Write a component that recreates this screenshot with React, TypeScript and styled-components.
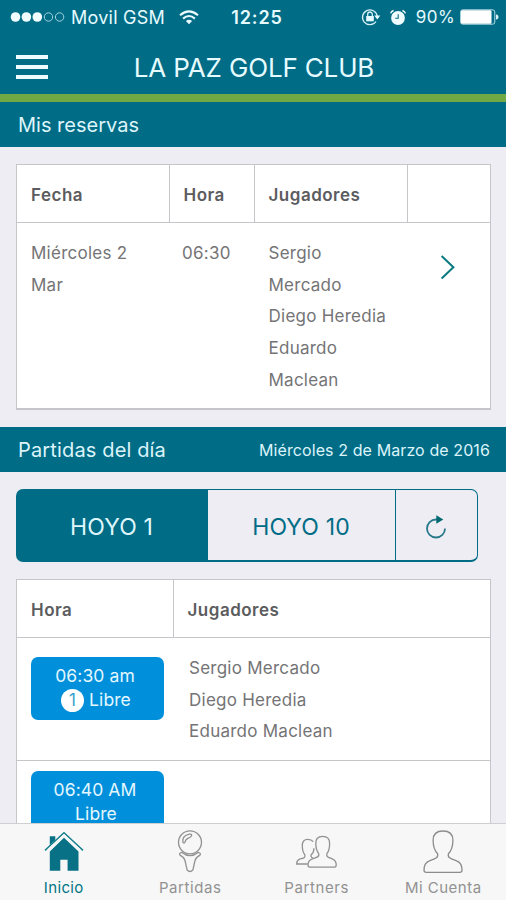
import React from "react";
import styled, { createGlobalStyle, css } from "styled-components";

const teal = "#006c86";
const line = "#c6c5ca";

const GlobalStyle = createGlobalStyle`
  *, *::before, *::after { box-sizing: border-box; }
  body { margin: 0; background: #eeedf3; }
  #root { height: 900px; }
`;

const Screen = styled.div`
  display: flex;
  flex-direction: column;
  width: 506px;
  height: 900px;
  overflow: hidden;
  background: #eeedf3;
  color: #747476;
  font-family: Inter, "Liberation Sans", sans-serif;
`;

const TopBar = styled.header`
  flex: none;
  height: 102px;
  background: ${teal};
  border-bottom: 8px solid #70a843;
  color: #e6fbff;
`;

const StatusBar = styled.div`
  display: grid;
  grid-template-columns: 1fr auto 1fr;
  align-items: center;
  height: 34px;
  padding: 0 7px 0 10px;
`;

const StatusGroup = styled.div<{ $end?: boolean }>`
  display: flex;
  align-items: center;
  justify-content: ${(p) => (p.$end ? "flex-end" : "flex-start")};
  white-space: nowrap;
`;

const Carrier = styled.span`
  margin: 0 14px 0 6px;
  font-size: 18px;
  letter-spacing: 0.25px;
`;

const Clock = styled.span`
  padding-left: 5px;
  font-size: 18px;
  font-weight: 600;
  letter-spacing: 0.9px;
`;

const Percent = styled.span`
  margin: 0 5px 0 9px;
  font-size: 17px;
  letter-spacing: 0.4px;
`;

const NavBar = styled.div`
  display: grid;
  grid-template-columns: 32px 1fr 32px;
  align-items: center;
  height: 60px;
  padding: 6px 15px 0 16px;
`;

const MenuButton = styled.button`
  display: flex;
  flex-direction: column;
  gap: 6px;
  padding: 0;
  border: 0;
  background: none;
`;

const MenuLine = styled.span`
  width: 32px;
  height: 4px;
  background: #effcff;
`;

const Title = styled.h1`
  margin: 0;
  padding: 1px 0 0 1px;
  font-size: 26px;
  font-weight: 400;
  line-height: 32px;
  letter-spacing: -0.16px;
  text-align: center;
  white-space: nowrap;
`;

const SectionBar = styled.div`
  display: flex;
  flex: none;
  align-items: center;
  justify-content: space-between;
  height: 45px;
  padding: 0 16px 0 18px;
  background: ${teal};
  color: #dcf4fa;
  white-space: nowrap;
`;

const SectionTitle = styled.h2<{ $tracking: number }>`
  margin: 0;
  font-size: 20px;
  font-weight: 400;
  letter-spacing: ${(p) => p.$tracking}px;
`;

const SectionDate = styled.span`
  font-size: 16px;
  letter-spacing: 0.1px;
`;

const Table = styled.div<{ $columns: string; $open?: boolean }>`
  --columns: ${(p) => p.$columns};
  flex: none;
  margin: 17px 15px ${(p) => (p.$open ? 0 : 17)}px 16px;
  border: 1.5px solid ${line};
  border-bottom-width: ${(p) => (p.$open ? 0 : 2)}px;
  background: #fff;
`;

const HeadRow = styled.div`
  display: grid;
  grid-template-columns: var(--columns);
  height: 58px;
  border-bottom: 1px solid ${line};
`;

const HeadCell = styled.div`
  display: flex;
  align-items: center;
  padding: 2px 0 0 14px;
  color: #5c5c5e;
  font-size: 17px;
  font-weight: 560;
  letter-spacing: 0.5px;

  & + & { padding-left: 13.5px; border-left: 1px solid ${line}; }
`;

const BodyRow = styled.div<{ $height: number }>`
  display: grid;
  grid-template-columns: var(--columns);
  height: ${(p) => p.$height}px;
  border-bottom: 1px solid ${line};

  &:last-child { border-bottom: 0; }
`;

const BodyCell = styled.div<{ $left?: number; $top?: number }>`
  padding: ${(p) => p.$top ?? 15}px 0 0 ${(p) => p.$left ?? 14}px;
  font-size: 17px;
  line-height: 31.7px;
  letter-spacing: 0.25px;
  white-space: nowrap;
`;

const Line = styled.div``;

const ArrowCell = styled.div`
  padding: 31px 0 0 33px;
`;

const Segments = styled.div`
  display: grid;
  flex: none;
  grid-template-columns: 190px 188px 1fr;
  height: 73px;
  margin: 17px 28px 0 16px;
  border: 1.5px solid ${teal};
  border-bottom-width: 2px;
  border-radius: 7px;
  background: linear-gradient(90deg, ${teal} 190px, transparent 190px);
  overflow: hidden;
`;

const Segment = styled.button<{ $active?: boolean }>`
  display: flex;
  align-items: center;
  justify-content: center;
  padding: 3px 1px 0 0;
  border: 0;
  background: none;
  color: ${teal};
  font: 400 23px Inter, "Liberation Sans", sans-serif;
  letter-spacing: 0.15px;

  & + & { border-left: 1.5px solid ${teal}; }
  ${(p) =>
    p.$active &&
    css`
      color: #dff6fb;
    `}
`;

const Slot = styled.button`
  display: block;
  width: 133px;
  height: 63px;
  padding: 0 4px 0 0;
  border: 0;
  border-radius: 7px;
  background: #0090db;
  color: #e4f7ff;
  font: 400 17.5px/24px Inter, "Liberation Sans", sans-serif;
  letter-spacing: 0.1px;
`;

const SlotStatus = styled.div`
  display: flex;
  align-items: center;
  justify-content: center;
  gap: 5px;
  height: 24px;
  padding-left: 2px;
`;

const Badge = styled.span`
  width: 23px;
  height: 23px;
  border-radius: 50%;
  background: #fff;
  color: #3a9fd0;
  font-size: 17px;
  line-height: 23px;
`;

const Scroller = styled.main`
  flex: 1;
  min-height: 0;
  overflow: hidden;
`;

const TabBar = styled.nav`
  display: grid;
  flex: none;
  grid-template-columns: repeat(4, 1fr);
  height: 77px;
  border-top: 1.5px solid #cfcfd1;
  background: #f7f7f7;
`;

const Tab = styled.a<{ $active?: boolean; $tracking: number }>`
  display: flex;
  flex-direction: column;
  align-items: center;
  padding-left: 1px;
  color: ${(p) => (p.$active ? "#007584" : "#929292")};
  font-size: 15px;
  line-height: 20px;
  letter-spacing: ${(p) => p.$tracking}px;
  white-space: nowrap;
`;

const TabIcon = styled.span`
  display: flex;
  justify-content: center;
  height: 54px;
  padding-top: 6px;
`;

const StatusIcons = styled.span`
  display: flex;
  align-items: center;
  gap: 8px;
`;

const Signal = () => (
  <svg width="55" height="12" viewBox="0 0 55 12" fill="#f2fdff">
    <circle cx="5.5" cy="6" r="4.8" />
    <circle cx="16.4" cy="6" r="4.8" />
    <circle cx="27.3" cy="6" r="4.8" />
    <g fill="none" stroke="#a5d3df" strokeWidth="1">
      <circle cx="38.5" cy="6" r="4.2" />
      <circle cx="49.6" cy="6" r="4.2" />
    </g>
  </svg>
);

const Wifi = () => (
  <svg width="20" height="15" viewBox="0 0 20 15" fill="none" stroke="#eafbff" strokeWidth="2.1">
    <path d="M1 5.3Q10-2.5 19 5.3M4.1 8.6Q10 3.4 15.9 8.6" />
    <path d="M6.9 11.1Q10 8.5 13.1 11.1L10 14.2Z" fill="#eafbff" stroke="none" />
  </svg>
);

const RotationLock = () => (
  <svg width="20" height="18" viewBox="0 0 20 18" fill="none" stroke="#d5f0f6" strokeWidth="1.3">
    <path d="M15 13.5A7.4 7.4 0 1 1 16.2 8" />
    <path d="M13.3 7.6h6l-3 4z" fill="#e6fbff" stroke="none" />
    <rect x="5.2" y="8" width="7.6" height="5.3" fill="#e6fbff" stroke="none" />
    <path d="M6.7 8V6.3a2.3 2.3 0 0 1 4.6 0V8" />
  </svg>
);

const Alarm = () => (
  <svg width="18" height="17" viewBox="0 0 18 17">
    <circle cx="9" cy="9" r="6.9" fill="#f0fdff" />
    <path d="M1.6 4.4Q2.2 2.2 4.6 1.5M16.4 4.4Q15.8 2.2 13.4 1.5" fill="none" stroke="#f0fdff" strokeWidth="1.4" />
    <path d="M9.2 5.2v4H6.2" fill="none" stroke={teal} strokeWidth="1.1" />
  </svg>
);

const Battery = () => (
  <svg width="39" height="16" viewBox="0 0 39 16">
    <rect x=".6" y=".8" width="34.2" height="14.4" rx="2.2" fill="none" stroke="#b6dbe5" strokeWidth="1" />
    <rect x="1" y="1.2" width="30.5" height="13.6" rx="1.3" fill="#fff" />
    <path d="M36 5.2q2.6.7 2.6 2.8T36 10.8z" fill="#d9f0f6" />
  </svg>
);

const Chevron = () => (
  <svg width="16" height="26" viewBox="0 0 16 26" fill="none" stroke="#087a80" strokeWidth="2">
    <path d="M1.6 2L13.4 13.2L1.6 24.5" />
  </svg>
);

const Refresh = () => (
  <svg width="22" height="24" viewBox="0 0 22 24" fill="none" stroke="#27798a" strokeWidth="1.8">
    <path d="M12 4.5H11A9 9 0 1 0 20 13.5" />
    <path d="M11.3.3L18.3 4.6L11.3 8.8Z" fill="#006a72" stroke="none" />
  </svg>
);

const HomeIcon = () => (
  <svg width="40" height="42" viewBox="0 0 40 42">
    <path d="M5.8 6.2h5.5v4L5.8 15zM20 7.7L34.5 21.4V40.8H23.6V29.7H16.3V40.8H5.8V21.4Z" fill="#087186" />
    <path d="M1 20.4L20 2.8L39 20.4" fill="none" stroke="#15808b" strokeWidth="1.5" />
    <path d="M4 19.8L20 5.3L36 19.8" fill="none" stroke="#f7f7f7" strokeWidth="1.8" />
  </svg>
);

const TeeIcon = () => (
  <svg width="28" height="43" viewBox="0 0 28 43" fill="none" stroke="#929292" strokeWidth="1.3">
    <circle cx="14" cy="12.3" r="11.5" />
    <path d="M6.8 12.2Q6 5.8 13.3 4.2Q16 3.8 15.6 5.8Q14.8 7.3 12.4 8.1Q9.5 9.2 9.1 12Q8 14 6.8 12.2Z" />
    <path d="M6 22.4Q2.6 22.9 4 25.1Q8.1 27.2 9 30.5L11.1 40Q14 43 16.9 40L19 30.5Q20 27.2 24 25.1Q25.4 22.9 22 22.4Q14 29 6 22.4Z" />
  </svg>
);

const PersonIcon = () => (
  <svg width="40" height="44" viewBox="0 0 40 44" fill="none" stroke="#8d8d8d" strokeWidth="1.3">
    <path d="M20 1C13.1 1 10.1 4.6 10.1 10.2C10.1 17.6 12 21 14.6 23.8C15.7 27.8 11.8 29 6.5 30.8C1.5 32.4 1 36.2 1 40.3Q1 42.3 3.2 42.3H36.8Q39 42.3 39 40.3C39 36.2 38.5 32.4 33.5 30.8C28.2 29 24.3 27.8 25.4 23.8C28 21 29.9 17.6 29.9 10.2C29.9 4.6 26.9 1 20 1Z" />
  </svg>
);

const PartnersIcon = () => (
  <svg width="41" height="42" viewBox="0 0 41 42" fill="none" stroke="#929292" strokeWidth="1.3">
    <path d="M17.2 11.7C15.8 9.8 13.7 9.4 11.8 9.4C8 9.4 6.3 11.5 6.3 15.6C6.3 20.5 7.3 23 8.8 24.7C9.8 28.1 6.8 28 3.5 29.2Q.7 30.5.7 34H11.7" />
    <path d="M26.7 6.4C21.5 6.4 19.8 9.1 19.8 13.3C19.8 18.8 21 21.5 22.7 23.6C23.7 26.8 20.6 27.4 16.5 28.8Q12 30.2 12 34.8Q12 37.2 13.7 37.2H38.7Q40.2 37.2 40.2 34.8Q40.2 30.2 36.2 28.8C32.1 27.4 30 26.8 30.9 23.6C32.9 21.5 33.6 18.8 33.6 13.3C33.6 9.1 31.9 6.4 26.7 6.4Z" />
    <path d="M18 18.2Q18 22.5 15 25Q14.5 27 17 28.3" />
  </svg>
);

export default function App() {
  return (
    <Screen>
      <GlobalStyle />
      <TopBar>
        <StatusBar>
          <StatusGroup>
            <Signal />
            <Carrier>Movil GSM</Carrier>
            <Wifi />
          </StatusGroup>
          <Clock>12:25</Clock>
          <StatusGroup $end>
            <StatusIcons>
              <RotationLock />
              <Alarm />
            </StatusIcons>
            <Percent>90%</Percent>
            <Battery />
          </StatusGroup>
        </StatusBar>
        <NavBar>
          <MenuButton aria-label="Menú">
            <MenuLine />
            <MenuLine />
            <MenuLine />
          </MenuButton>
          <Title>LA PAZ GOLF CLUB</Title>
        </NavBar>
      </TopBar>
      <Scroller>
        <SectionBar>
          <SectionTitle $tracking={0}>Mis reservas</SectionTitle>
        </SectionBar>
        <Table $columns="152px 85px 153px 1fr">
          <HeadRow>
            <HeadCell>Fecha</HeadCell>
            <HeadCell>Hora</HeadCell>
            <HeadCell>Jugadores</HeadCell>
            <HeadCell />
          </HeadRow>
          <BodyRow $height={185}>
            <BodyCell>
              <Line>Miércoles 2</Line>
              <Line>Mar</Line>
            </BodyCell>
            <BodyCell $left={13}>06:30</BodyCell>
            <BodyCell $left={14.5}>
              <Line>Sergio</Line>
              <Line>Mercado</Line>
              <Line>Diego Heredia</Line>
              <Line>Eduardo</Line>
              <Line>Maclean</Line>
            </BodyCell>
            <ArrowCell>
              <Chevron />
            </ArrowCell>
          </BodyRow>
        </Table>
        <SectionBar>
          <SectionTitle $tracking={0.15}>Partidas del día</SectionTitle>
          <SectionDate>Miércoles 2 de Marzo de 2016</SectionDate>
        </SectionBar>
        <Segments>
          <Segment $active>HOYO 1</Segment>
          <Segment>HOYO 10</Segment>
          <Segment aria-label="Actualizar">
            <Refresh />
          </Segment>
        </Segments>
        <Table $columns="156px 1fr" $open>
          <HeadRow>
            <HeadCell>Hora</HeadCell>
            <HeadCell>Jugadores</HeadCell>
          </HeadRow>
          <BodyRow $height={123}>
            <BodyCell $left={13.5} $top={18.5}>
              <Slot>
                06:30 am
                <SlotStatus>
                  <Badge>1</Badge>Libre
                </SlotStatus>
              </Slot>
            </BodyCell>
            <BodyCell $left={16}>
              <Line>Sergio Mercado</Line>
              <Line>Diego Heredia</Line>
              <Line>Eduardo Maclean</Line>
            </BodyCell>
          </BodyRow>
          <BodyRow $height={123}>
            <BodyCell $left={13.5} $top={9.5}>
              <Slot>
                06:40 AM
                <SlotStatus>Libre</SlotStatus>
              </Slot>
            </BodyCell>
          </BodyRow>
        </Table>
      </Scroller>
      <TabBar>
        <Tab $active $tracking={0.35}>
          <TabIcon>
            <HomeIcon />
          </TabIcon>
          Inicio
        </Tab>
        <Tab $tracking={0.6}>
          <TabIcon>
            <TeeIcon />
          </TabIcon>
          Partidas
        </Tab>
        <Tab $tracking={0.6}>
          <TabIcon>
            <PartnersIcon />
          </TabIcon>
          Partners
        </Tab>
        <Tab $tracking={0.5}>
          <TabIcon>
            <PersonIcon />
          </TabIcon>
          Mi Cuenta
        </Tab>
      </TabBar>
    </Screen>
  );
}
